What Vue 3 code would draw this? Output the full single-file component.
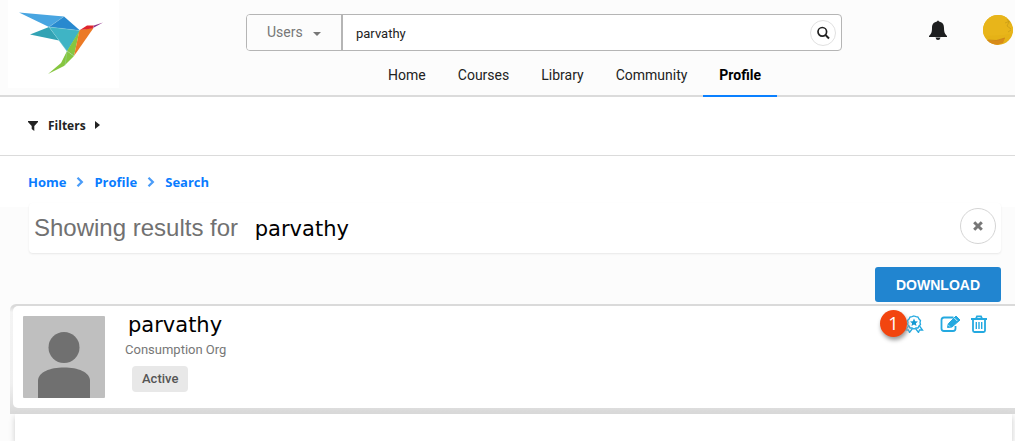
<script setup>
import { ref } from 'vue'

const query = ref('parvathy')
const links = ['Home', 'Courses', 'Library', 'Community', 'Profile']
const crumbs = ['Home', 'Profile', 'Search']
</script>

<template>
  <div class="page">
    <header class="header">
      <a class="logo" href="#" aria-label="Homepage">
        <svg viewBox="0 0 111 88" width="111" height="88">
          <path d="M11 12.500L56 16.500L41 27Z" fill="#48a5e1" />
          <path d="M56 16.500L72 30.500L41 27Z" fill="#2889cf" />
          <path d="M22 34.500L41 27L51 40.500Z" fill="#32a3b4" />
          <path d="M41 27L72 30.500L59 51.500Z" fill="#3fb4c5" />
          <path d="M71.500 30.500L66 56L59 51Z" fill="#86c640" />
          <path d="M59 51L66 56L56 66L40 74L53 63Z" fill="#86c640" />
          <path d="M71.500 30L85.500 28L66 56Z" fill="#ec7a25" />
          <path d="M72 30L79 25.500L86 25.500L84.500 28.500Z" fill="#df252d" />
          <path d="M86 25.500L95 22.500L85 28Z" fill="#8f3189" />
          <path d="M56 16.500L41 27L72 30.500M41 27L59 51L57 66M59 51L66 56" fill="none" stroke="#a7dbe3" stroke-width=".3" />
        </svg>
      </a>
      <div class="center">
        <form class="search" @submit.prevent>
          <div class="scope">
            <select aria-label="Search in"><option>Users</option></select>
            <svg class="caret" viewBox="0 0 8 4" width="8" height="4"><path d="M0 0H8L4 4Z" fill="#777" /></svg>
          </div>
          <input v-model="query" type="text" aria-label="Search text" />
          <button class="go" type="submit" aria-label="Search">
            <svg viewBox="0 0 14 14" width="14" height="14" fill="none" stroke="#222">
              <circle cx="6.300" cy="5.800" r="4.300" stroke-width="1.700" /><path d="M9.500 9L13 12.500" stroke-width="2" />
            </svg>
          </button>
        </form>
        <nav class="nav">
          <a v-for="link in links" :key="link" href="#" :class="{ current: link === 'Profile' }">{{ link }}</a>
        </nav>
      </div>
      <div class="account">
        <button class="bell" aria-label="Notifications">
          <svg viewBox="0 0 20 20" width="20" height="20" fill="#1d1e1f">
            <path d="M9 1.500Q10 -.6 11 1.500C15 2.300 16 5 16 8C16 12.500 17 14 19 16V17H1V16C3 14 4 12.500 4 8C4 5 5 2.300 9 1.500Z" />
            <path d="M7.500 17.500H12.500Q12 20 10 20Q8 20 7.500 17.500Z" />
          </svg>
        </button>
        <a class="me" href="#" aria-label="My account">
          <svg viewBox="0 0 30 30" width="30" height="30">
            <defs><clipPath id="disc"><circle cx="15" cy="15" r="15" /></clipPath></defs>
            <g clip-path="url(#disc)">
              <rect width="30" height="30" fill="#e5b217" />
              <path d="M0 0H24L25 8L30 12V18L21 20L0 21Z" fill="#e8b51a" />
              <path d="M24 4L26 7L24 11L28 14M22 8L27 6M25 17L28 15" fill="none" stroke="#c49a18" stroke-width=".7" />
              <path d="M4 25Q12 27 22 23L20 28L14 30H4Z" fill="#d88b18" />
              <path d="M5 25Q13 27 22 23" fill="none" stroke="#c8801a" stroke-width=".8" />
            </g>
          </svg>
        </a>
      </div>
    </header>

    <div class="filters">
      <button>
        <svg viewBox="0 0 10 10" width="10" height="10"><path d="M0 0H10V1L6.300 5V10L3.700 8V5L0 1Z" fill="#222" /></svg>
        <span>Filters</span>
        <svg class="tri" viewBox="0 0 5 8" width="5" height="8"><path d="M0 0L5 4L0 8Z" fill="#222" /></svg>
      </button>
    </div>

    <nav class="crumbs" aria-label="Breadcrumb">
      <template v-for="(crumb, i) in crumbs" :key="crumb">
        <svg v-if="i" viewBox="0 0 8 10" width="8" height="10"><path d="M1.500 .8L5.800 5L1.500 9.200" fill="none" stroke="#4a9cf8" stroke-width="2.300" /></svg>
        <a href="#">{{ crumb }}</a>
      </template>
    </nav>

    <main>
      <section class="results">
        <h1>Showing results for <span class="term">parvathy</span></h1>
        <button class="clear" aria-label="Clear search">
          <svg viewBox="0 0 10 10" width="10" height="10"><path d="M1.200 1.200L8.800 8.800M8.800 1.200L1.200 8.800" stroke="#777" stroke-width="3" /></svg>
        </button>
      </section>
      <div class="tools"><button class="download">DOWNLOAD</button></div>

      <div class="list">
        <article class="user">
          <svg class="photo" viewBox="0 0 82 82" width="82" height="82">
            <rect width="82" height="82" rx="1" fill="#bfbfbf" />
            <circle cx="41" cy="31.500" r="15.500" fill="#707070" />
            <path d="M15 82V65C15 56 27 51.500 41 51.500C55 51.500 67 56 67 65V82Z" fill="#707070" />
          </svg>
          <div class="info">
            <h2 class="term">parvathy</h2>
            <p>Consumption Org</p>
            <span class="status">Active</span>
          </div>
          <div class="actions">
            <button class="award" aria-label="Assign badge">
              <svg viewBox="0 0 20 18" width="20" height="18" fill="none" stroke="#24a9e0" stroke-width="1.300">
                <path d="M10 1L12 1.700L14 2L15 4L16.500 5.500L16 7.500L16.500 9.500L15 11L14 13L12 13L10 14L8 13L6 13L5 11L3.500 9.500L4 7.500L3.500 5.500L5 4L6 2L8 1.700Z" />
                <path d="M4.500 11L1.500 15L4.500 15L5.500 17.500L8.500 13.500M15.500 11L18.500 15L15.500 15L14.500 17.500L11.500 13.500" />
                <path d="M10 3.500L11.200 6.200L14 6.500L11.900 8.300L12.500 11L10 9.600L7.500 11L8.100 8.300L6 6.500L8.800 6.200Z" fill="#1499d2" stroke="none" />
              </svg>
              <span class="count">1</span>
            </button>
            <button aria-label="Edit">
              <svg viewBox="0 0 21 18" width="21" height="18" fill="none" stroke="#24a9e0" stroke-width="1.800">
                <path d="M13.500 2.500H4Q1.500 2.500 1.500 5V13.500Q1.500 16 4 16H13Q15.500 16 15.500 13.500V11" />
                <path d="M7.500 12.500L8.300 8.700L16 1L20 5L12 12Z" fill="#24a9e0" stroke="#24a9e0" stroke-width="1" />
                <path d="M14.300 3L17.300 6M8.500 10.200L9.800 11.500" stroke="#fff" stroke-width=".8" />
              </svg>
            </button>
            <button aria-label="Delete">
              <svg viewBox="0 0 16 18" width="16" height="18" fill="none" stroke="#24a9e0" stroke-width="1.800">
                <path d="M0 4H16M5 3.500L6 1.300H10L11 3.500M2 4V15.500Q2 17 3.500 17H12.500Q14 17 14 15.500V4" />
                <path d="M5.300 7V14M8 7V14M10.700 7V14" stroke-width="1.400" />
              </svg>
            </button>
          </div>
        </article>
      </div>
      <div class="next"></div>
    </main>
  </div>
</template>

<style>
body { margin: 0; background: #fcfcfc; }
</style>

<style scoped>
.page { min-height: 100vh; overflow: hidden; display: flex; flex-direction: column; box-sizing: border-box; font-family: Roboto, sans-serif; color: #222; }
button { border: 0; margin: 0; padding: 0; background: none; font: inherit; color: inherit; cursor: pointer; }
svg { display: block; }
a { text-decoration: none; color: inherit; }
h1, h2, p { margin: 0; font-weight: 400; }
.header { display: flex; height: 95px; border-bottom: 2px solid #dbdbdb; background: #fcfcfc; }
.logo { width: 111px; height: 88px; margin-left: 8px; background: #fff; }
.center { flex: 1; margin: 14px 86px 0 127px; display: flex; flex-direction: column; min-width: 0; }
.search { display: flex; height: 37px; box-sizing: border-box; border: 1px solid #b5b5b5; border-radius: 4px; background: #fff; align-items: center; overflow: hidden; flex: none; }
.scope { position: relative; width: 94px; height: 35px; background: #fcfcfc; border-right: 2px solid #b5b5b5; }
.scope select { appearance: none; width: 100%; height: 33px; padding: 0 20px; border: 0; background: transparent; font: 14px Roboto, sans-serif; color: #777; }
.caret { position: absolute; right: 20px; top: 17px; pointer-events: none; }
.search input { flex: 1; min-width: 0; border: 0; outline: 0; height: 35px; padding: 2px 13px 0; box-sizing: border-box; font: 13px Roboto, sans-serif; color: #222; background: transparent; }
.go { display: grid; place-items: center; width: 26px; height: 26px; margin-right: 5px; border: 1px solid #e0e0e0; border-radius: 50%; box-sizing: border-box; }
.nav { display: flex; margin: 0 65px 0 0; justify-content: flex-end; flex: 1; }
.nav a { padding: 0 16px; height: 44px; line-height: 48px; font-size: 14px; }
.nav .current { color: #000; font-weight: 700; border-bottom: 2px solid #0a80ff; }
.header { height: 95px; }
.account { display: flex; align-items: flex-start; gap: 35px; padding: 15px 2px 0 0; }
.bell { padding-top: 5px; }
.filters { height: 58px; box-sizing: content-box; border-bottom: 1px solid #dbdbdb; background: #fff; display: flex; align-items: center; padding-left: 28px; }
.filters button { display: flex; align-items: center; gap: 10px; font: 700 12px/16px "Open Sans", sans-serif; }
.filters .tri { margin: 0 0 2px -1px; }
.crumbs { height: 51px; box-sizing: border-box; background: #fff; display: flex; align-items: center; gap: 10px; padding: 0 28px; font: 700 13px "Open Sans", sans-serif; color: #0a7cff; }
main { flex: 1; display: flex; flex-direction: column; }
.results { position: relative; display: flex; justify-content: space-between; align-items: center; height: 50px; margin: -4px 14px 0 29px; padding: 0 5px; background: #fff; border-radius: 4px; box-shadow: 0 1px 2px #e8e8e8; box-sizing: border-box; }
.results h1 { font: 24px "Liberation Sans", sans-serif; color: #717171; }
.term { font: 21px "DejaVu Sans", sans-serif; color: #000; }
.results .term { margin-left: 10px; }
.clear { display: grid; place-items: center; width: 36px; height: 36px; margin-bottom: 4px; border: 1px solid #d5d5d5; border-radius: 50%; box-sizing: border-box; }
.tools { display: flex; justify-content: flex-end; padding: 14px 14px 2px 0; }
.download { width: 126px; height: 35px; border-radius: 3px; background: #2185d0; color: #fff; font: 700 14px "Liberation Sans", sans-serif; }
.list { margin-left: 10px; padding: 2px 0 6px 3px; background: linear-gradient(to bottom, #dadada 0 3px, #f4f4f4 8px, #f0f0f0 80px, #dadada 108px); border-top-left-radius: 6px; }
.user { display: flex; min-height: 102px; box-sizing: border-box; padding: 10px; border-radius: 5px 0 0 5px; background: #fff; }
.info { padding-left: 20px; flex: 1; }
.info h2 { line-height: 24px; margin: -3px 0 0 3px; }
.info p { font-size: 13px; line-height: 16px; margin-top: 5px; color: #777; }
.status { display: inline-block; margin: 8px 0 0 7px; padding: 0 10px; border-radius: 4px; background: #e8e8e8; color: #555; font-size: 13px; font-weight: 500; line-height: 26px; }
.actions { display: flex; gap: 10px; align-items: flex-start; padding-right: 18px; margin-top: -1px; }
.award { position: relative; margin-right: 6px; }
.count { position: absolute; right: 17px; top: -5px; width: 27px; height: 27px; border-radius: 50%; background: #f2450f; color: #fff; font: 18px/26px "Open Sans", sans-serif; text-align: center; box-shadow: 1px 3px 4px #999; }
.next { flex: 1; min-height: 27px; margin: 0 3px 0 15px; background: #fff; box-shadow: 0 3px 6px #ccc; }
</style>
